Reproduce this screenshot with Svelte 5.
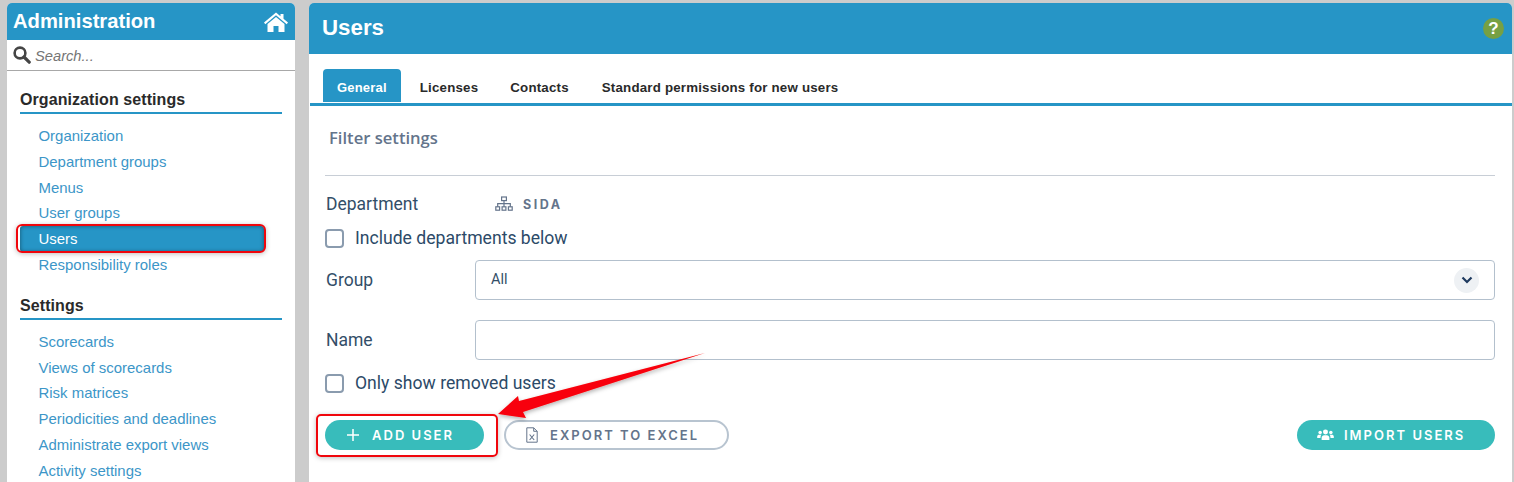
<script>
  const groups = [
    { title: 'Organization settings', items: ['Organization', 'Department groups', 'Menus', 'User groups', 'Users', 'Responsibility roles'] },
    { title: 'Settings', items: ['Scorecards', 'Views of scorecards', 'Risk matrices', 'Periodicities and deadlines', 'Administrate export views', 'Activity settings'] }
  ];
  const tabs = ['General', 'Licenses', 'Contacts', 'Standard permissions for new users'];
</script>

<div class="page">
  <aside class="side">
    <header class="side-head">
      <h1>Administration</h1>
      <svg class="home" viewBox="0 0 24 20" width="24" height="20" aria-hidden="true">
        <path fill="#fff" d="M12 0.5 L16.5 4.3 V2 H19.5 V6.8 L24 10.6 L22.7 12.2 L12 3.2 L1.3 12.2 L0 10.6 Z M12 5 L20.5 12 V20 H14.5 V14 H9.5 V20 H3.5 V12 Z"/>
      </svg>
    </header>
    <div class="search">
      <svg viewBox="0 0 18 18" width="18" height="18" aria-hidden="true">
        <circle cx="7" cy="7" r="5.4" fill="none" stroke="#454545" stroke-width="2.6"/>
        <path d="M11 11 L16.2 16.2" stroke="#454545" stroke-width="3.2" stroke-linecap="round"/>
      </svg>
      <span>Search...</span>
    </div>
    {#each groups as g}
      <section class="group">
        <h2>{g.title}</h2>
        <ul>
          {#each g.items as item}
            <li class:active={item === 'Users'}>{item}</li>
          {/each}
        </ul>
      </section>
    {/each}
  </aside>

  <main class="main">
    <header class="main-head">
      <h1>Users</h1>
      <span class="help">?</span>
    </header>
    <nav class="tabs">
      {#each tabs as t, i}
        <span class="tab" class:on={i === 0}>{t}</span>
      {/each}
    </nav>
    <div class="body">
      <h3>Filter settings</h3>
      <hr />
      <div class="dept">
        <span class="label">Department</span>
        <svg viewBox="0 0 18 16" width="18" height="16" aria-hidden="true" fill="none" stroke="#64748b" stroke-width="1.2">
          <rect x="6.6" y="1" width="4.8" height="3.6"/>
          <rect x="0.8" y="10.8" width="3.8" height="3.4"/>
          <rect x="7.1" y="10.8" width="3.8" height="3.4"/>
          <rect x="13.4" y="10.8" width="3.8" height="3.4"/>
          <path d="M9 4.6 V10.8 M2.7 10.8 V7.7 H15.3 V10.8"/>
        </svg>
        <span class="sida">SIDA</span>
      </div>
      <label class="check first"><span class="box"></span>Include departments below</label>
      <div class="row group-row">
        <span class="label">Group</span>
        <div class="field select">
          <span>All</span>
          <span class="chev">
            <svg viewBox="0 0 12 8" width="12" height="8" aria-hidden="true"><path d="M1.5 1.5 L6 6 L10.5 1.5" fill="none" stroke="#1e3a5f" stroke-width="2.2"/></svg>
          </span>
        </div>
      </div>
      <div class="row name-row">
        <span class="label">Name</span>
        <div class="field"></div>
      </div>
      <label class="check second"><span class="box"></span>Only show removed users</label>
      <div class="actions">
        <button class="btn solid add">
          <svg viewBox="0 0 12 12" width="12" height="12" aria-hidden="true"><path d="M6 0 V12 M0 6 H12" stroke="#fff" stroke-width="1.5"/></svg>
          ADD USER
        </button>
        <button class="btn ghost">
          <svg viewBox="0 0 12 16" width="12" height="16" aria-hidden="true" fill="none" stroke="#64748b" stroke-width="1">
            <path d="M0.8 0.8 H7.7 L11.2 4.3 V15.2 H0.8 Z M7.7 0.8 V4.3 H11.2"/>
            <path d="M3.6 7.5 L8.2 13 M8.2 7.5 L3.6 13" stroke-width="1.1"/>
          </svg>
          EXPORT TO EXCEL
        </button>
        <button class="btn solid import">
          <svg viewBox="0 0 18 13" width="17" height="12" aria-hidden="true" fill="#fff">
            <circle cx="9" cy="3.2" r="2.7"/>
            <circle cx="3.2" cy="3.8" r="1.9"/>
            <circle cx="14.8" cy="3.8" r="1.9"/>
            <path d="M4.8 12 V9.5 C4.8 7.6 6.2 6.7 7.5 6.7 H10.5 C11.8 6.7 13.2 7.6 13.2 9.5 V12 Z"/>
            <path d="M0 9.8 V8 C0 6.8 1 6.2 2 6.2 H4.6 C3.8 7 3.6 8.2 3.6 9.8 Z M18 9.8 V8 C18 6.8 17 6.2 16 6.2 H13.4 C14.2 7 14.4 8.2 14.4 9.8 Z"/>
          </svg>
          IMPORT USERS
        </button>
      </div>
    </div>
  </main>

  <span class="mark mark-users"></span>
  <span class="mark mark-add"></span>
  <svg class="arrow" viewBox="0 0 225 85" width="225" height="85" aria-hidden="true">
    <defs>
      <filter id="sh" x="-10%" y="-30%" width="120%" height="170%">
        <feDropShadow dx="0" dy="2" stdDeviation="2" flood-color="#000" flood-opacity="0.3"/>
      </filter>
    </defs>
    <path filter="url(#sh)" fill="#f80209" d="M215 8 L29 56 L28 51 L8 69 L36 73 L33 67 Z"/>
  </svg>
</div>

<style>
  :global(body) { margin: 0; background: #cccccc; }
  .page {
    position: relative;
    width: 1514px;
    height: 482px;
    overflow: hidden;
    background: #cccccc;
    display: flex;
    align-items: flex-start;
    padding: 3px 2px 0 7px;
    box-sizing: border-box;
    gap: 14px;
    font-family: "Liberation Sans", Arial, sans-serif;
  }
  .side {
    width: 288px;
    height: 479px;
    flex: none;
    background: #fff;
    border-radius: 5px 5px 0 0;
    overflow: hidden;
  }
  .side-head {
    height: 37px;
    background: #2695c6;
    display: flex;
    align-items: center;
    justify-content: space-between;
    padding: 0 7px 0 6px;
    color: #fff;
  }
  .side-head h1 { margin: 0; font-size: 20.2px; font-weight: 700; }
  .search {
    height: 30px;
    border-bottom: 1px solid #a8a8a8;
    display: flex;
    align-items: center;
    gap: 4px;
    padding-left: 6px;
    box-sizing: content-box;
    font-size: 14.7px;
    font-style: italic;
    color: #757575;
  }
  .search span { margin-top: 2px; }
  .group { padding: 0 13px; }
  .group:first-of-type { margin-top: 19px; }
  .group + .group { margin-top: 18px; }
  .group h2 {
    margin: 0;
    font-size: 16px;
    line-height: 20px;
    font-weight: 700;
    color: #2a2a2a;
    border-bottom: 2px solid #2695c6;
    padding-bottom: 2px;
    letter-spacing: 0.08px;
  }
  .group ul { list-style: none; margin: 9px 0 0; padding: 0; }
  .group li {
    height: 25.8px;
    line-height: 25.8px;
    padding-left: 18.5px;
    margin-right: 18px;
    font-size: 14.95px;
    color: #3c96c8;
  }
  .group li.active {
    background: #2695c6;
    color: #fff;
    border-radius: 3px;
    box-shadow: inset 0 0 4px rgba(0, 0, 0, 0.45);
  }
  .main {
    flex: 1;
    height: 479px;
    background: #fff;
    border-radius: 5px 5px 0 0;
    overflow: hidden;
  }
  .main-head {
    height: 51px;
    background: #2695c6;
    display: flex;
    align-items: center;
    justify-content: space-between;
    padding: 0 8px 0 13px;
    color: #fff;
  }
  .main-head h1 { margin: 0 0 2px; font-size: 22.3px; font-weight: 700; }
  .help {
    width: 21px;
    height: 21px;
    border-radius: 50%;
    background: #76a043;
    color: #fff;
    font-size: 17px;
    font-weight: 700;
    line-height: 21px;
    text-align: center;
    margin-bottom: 1px;
  }
  .tabs {
    margin: 13px 0 0 1px;
    height: 36px;
    border-bottom: 3px solid #2695c6;
    display: flex;
    align-items: flex-end;
    padding-left: 13px;
    box-sizing: content-box;
  }
  .tab {
    height: 33px;
    line-height: 37px;
    font-size: 13.3px;
    font-weight: 700;
    color: #2a2a2a;
    padding: 0 14px;
    margin-right: 5px;
    letter-spacing: 0.015em;
    margin-bottom: 1px;
    box-sizing: border-box;
  }
  .tab:nth-child(2) { padding: 0 13.5px 0 14px; }
  .tab:nth-child(3) { padding: 0 13.5px; }
  .tab:nth-child(4) { padding-left: 14.5px; }
  .tab.on {
    background: #2695c6;
    color: #fff;
    border-radius: 4px 4px 0 0;
    font-size: 13px;
  }
  .body { padding: 0 17px 0 16px; color: #334e68; font-family: Roboto, sans-serif; }
  h3 {
    margin: 21px 0 0 4px;
    font-family: "Open Sans", sans-serif;
    font-size: 16.6px;
    line-height: 22px;
    font-weight: 600;
    color: #64748b;
  }
  hr {
    border: 0;
    border-top: 1px solid #c8ced6;
    margin: 26px 0 0 0;
  }
  .label { font-size: 17.5px; color: #334e68; padding-left: 1px; }
  .dept {
    height: 30px;
    margin-top: 13px;
    display: flex;
    align-items: center;
  }
  .dept .label { width: 169px; }
  .dept svg { margin-bottom: 1px; }
  .sida {
    margin-left: 10px;
    font: 700 12.5px "Inter", sans-serif;
    letter-spacing: 0.2em;
    color: #64748b;
  }
  .check {
    display: flex;
    align-items: center;
    font-size: 17.6px;
    color: #2c4a68;
    height: 26px;
  }
  .check.first { margin-top: 6px; }
  .check.second { margin-top: 10px; }
  .box {
    width: 15px;
    height: 15px;
    border: 2px solid #8a9bae;
    border-radius: 4px;
    margin-right: 11px;
    flex: none;
  }
  .row { display: flex; align-items: center; }
  .row .label { width: 149px; flex: none; }
  .group-row { margin-top: 9px; }
  .name-row { margin-top: 20px; }
  .field {
    flex: 1;
    height: 38px;
    border: 1px solid #b3c0cd;
    border-radius: 4px;
    display: flex;
    align-items: center;
    justify-content: space-between;
    padding: 0 15px;
    box-sizing: content-box;
    font-size: 14.5px;
    color: #334e68;
  }
  .select > span:first-child { margin-bottom: 1px; }
  .chev {
    width: 25px;
    height: 25px;
    border-radius: 50%;
    background: #eef1f4;
    display: flex;
    align-items: center;
    justify-content: center;
  }
  .actions {
    display: flex;
    align-items: center;
    margin-top: 24px;
    gap: 20px;
  }
  .btn {
    height: 30px;
    border-radius: 15px;
    border: 0;
    display: inline-flex;
    align-items: center;
    font: 600 13px "Inter", sans-serif;
    letter-spacing: 0.155em;
    box-sizing: border-box;
    white-space: nowrap;
    padding: 0;
  }
  .solid { background: #38bcbb; color: #fff; }
  .add { width: 159px; padding-left: 22px; gap: 13px; letter-spacing: 0.155em; }
  .ghost {
    width: 225px;
    background: #fff;
    border: 2px solid #b8c4d0;
    color: #64748b;
    padding-left: 20px;
    gap: 12px;
  }
  .import { width: 198px; margin-left: auto; padding-left: 20px; gap: 10px; }
  .mark {
    position: absolute;
    border: 2px solid #f0060c;
    border-radius: 5px;
    box-sizing: border-box;
    box-shadow: 0 1px 5px rgba(0, 0, 0, 0.25);
    pointer-events: none;
  }
  .mark-users { left: 16px; top: 224px; width: 250px; height: 29px; border-radius: 6px; }
  .mark-add { left: 316px; top: 414px; width: 182px; height: 43px; }
  .arrow { position: absolute; left: 490px; top: 345px; }
</style>
